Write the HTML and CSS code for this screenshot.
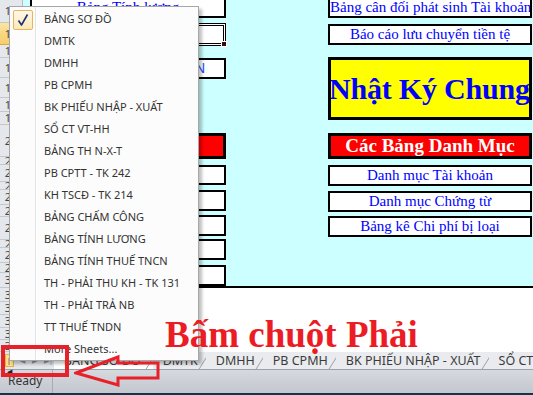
FILE: index.html
```html
<!DOCTYPE html>
<html lang="vi">

<head>
    <meta charset="UTF-8">
    <title>Bảng Sơ Đồ - Excel</title>
    <link rel="stylesheet" href="styles.css">
</head>

<body>
    <div class="window">
        <div class="sheet">
            <div class="rowhead">
                <div class="rh" style="height:23px">10</div>
                <div class="rh active" style="height:22px">11</div>
                <div class="rh" style="height:13px">12</div>
                <div class="rh" style="height:20px">13</div>
                <div class="rh" style="height:20px">14</div>
                <div class="rh" style="height:14px">15</div>
                <div class="rh" style="height:13px">16</div>
                <div class="rh" style="height:32px">20</div>
                <div class="rh" style="height:8px">21</div>
                <div class="rh" style="height:17px">22</div>
                <div class="rh" style="height:8px">23</div>
                <div class="rh" style="height:15px">24</div>
                <div class="rh" style="height:12px">25</div>
                <div class="rh" style="height:23px">26</div>
                <div class="rh" style="height:8px">27</div>
                <div class="rh" style="height:15px">28</div>
                <div class="rh" style="height:10px">29</div>
                <div class="rh" style="height:15px">30</div>
                <div class="rh" style="height:14px">31</div>
                <div class="rh" style="height:13px">32</div>
                <div class="rh" style="height:13px">33</div>
                <div class="rh" style="height:12px">34</div>
                <div class="rh" style="height:12px">35</div>
            </div>

            <div class="canvas">
                <div class="board">
                    <div class="col col-left">
                        <div class="box first">Bảng Tính lương</div>
                        <div class="box selected"><span class="handle"></span></div>
                        <div class="box sans">BẢNG CÂN ĐỐI KẾ TOÁN</div>
                        <div class="title red left-red">Sổ Sách Kế Toán</div>
                        <div class="box">Sổ Nhật ký chung</div>
                        <div class="box">Sổ Cái tài khoản</div>
                        <div class="box">Sổ chi tiết tài khoản</div>
                        <div class="box">Sổ quỹ tiền mặt</div>
                        <div class="box">Sổ tiền gửi ngân hàng</div>
                    </div>

                    <div class="col col-right">
                        <div class="box first">Bảng cân đối phát sinh Tài khoản</div>
                        <div class="box">Báo cáo lưu chuyển tiền tệ</div>
                        <div class="big-yellow">Nhật Ký Chung</div>
                        <div class="title red">Các Bảng Danh Mục</div>
                        <div class="box">Danh mục Tài khoản</div>
                        <div class="box">Danh mục Chứng từ</div>
                        <div class="box">Bảng kê Chi phí bị loại</div>
                    </div>
                </div>
                <div class="note">Bấm chuột Phải</div>
            </div>
        </div>

        <div class="tabbar">
            <div class="nav">
                <span class="nav-btn hot">|&#9664;</span>
                <span class="nav-btn">&#9664;</span>
                <span class="nav-btn">&#9654;</span>
                <span class="nav-btn">&#9654;|</span>
            </div>
            <div class="tab current">BẢNG SƠ ĐỒ</div>
            <div class="tab">DMTK</div>
            <div class="tab">DMHH</div>
            <div class="tab">PB CPMH</div>
            <div class="tab">BK PHIẾU NHẬP - XUẤT</div>
            <div class="tab">SỔ CT VT-HH</div>
        </div>

        <div class="status">
            <span class="ready">Ready</span>
        </div>
        <div class="taskbar"></div>

        <!-- context menu of the sheet navigation buttons -->
        <div class="menu">
            <div class="item checked">
                <span class="check">
                    <svg width="18" height="18" viewBox="0 0 18 18">
                        <path d="M4.5 9.5 L7.5 14 L13.5 3.5" fill="none" stroke="#1d2f7a" stroke-width="1.6" stroke-linejoin="round"/>
                    </svg>
                </span>
                BẢNG SƠ ĐỒ
            </div>
            <div class="item">DMTK</div>
            <div class="item">DMHH</div>
            <div class="item">PB CPMH</div>
            <div class="item">BK PHIẾU NHẬP - XUẤT</div>
            <div class="item">SỔ CT VT-HH</div>
            <div class="item">BẢNG TH N-X-T</div>
            <div class="item">PB CPTT - TK 242</div>
            <div class="item">KH TSCĐ - TK 214</div>
            <div class="item">BẢNG CHẤM CÔNG</div>
            <div class="item">BẢNG TÍNH LƯƠNG</div>
            <div class="item">BẢNG TÍNH THUẾ TNCN</div>
            <div class="item">TH - PHẢI THU KH - TK 131</div>
            <div class="item">TH - PHẢI TRẢ NB</div>
            <div class="item">TT THUẾ TNDN</div>
            <div class="item">More Sheets...</div>
        </div>

        <!-- red annotations -->
        <div class="mark-box"></div>
        <svg class="mark-arrow" width="90" height="36" viewBox="74 354 90 36">
            <path d="M76 373 L118 357 L118 363 L158 363 L158 378 L118 378 L118 385 Z" fill="none" stroke="#e8202a" stroke-width="3" stroke-linejoin="miter"/>
        </svg>
    </div>
</body>

</html>
```

FILE: styles.css
```css
body {
    margin: 0;
    padding: 0;
    background: #ffffff;
}

.window {
    position: relative;
    width: 533px;
    height: 395px;
    overflow: hidden;
    font-family: "Noto Sans", Arial, sans-serif;
}

/* sheet */
.sheet {
    display: flex;
    height: 352px;
}

.rowhead {
    width: 22px;
    background: #e4e8ed;
    border-right: 1px solid #b7bcc4;
    overflow: hidden;
}

.rh {
    box-sizing: border-box;
    border-bottom: 1px solid #c3c8cf;
    font-size: 11px;
    line-height: 12px;
    color: #444;
    text-align: center;
    overflow: hidden;
    display: flex;
    align-items: center;
    justify-content: center;
}

.rh.active {
    background: linear-gradient(#fbe3a1, #f6cd6a);
    border-bottom-color: #e0a93c;
}

.canvas {
    flex: 1;
    background: #ffffff;
}

.board {
    display: flex;
    gap: 102px;
    height: 286px;
    padding-left: 7px;
    background: #ccffff;
    border-bottom: 2px solid #000;
}

.col {
    display: flex;
    flex-direction: column;
}

.col-left {
    width: 196px;
}

.col-right {
    width: 204px;
}

.box {
    position: relative;
    box-sizing: border-box;
    height: 21px;
    border: 2px solid #000;
    background: #fff;
    color: #0000ff;
    font-family: "Liberation Serif", "Times New Roman", serif;
    font-size: 15px;
    line-height: 17px;
    text-align: center;
    white-space: nowrap;
    overflow: hidden;
}

.box.first {
    margin-top: -3px;
}

.col-left .box:nth-child(2) {
    margin-top: 5px;
}

.col-left .box:nth-child(3) {
    margin-top: 12px;
}

.col-left .title {
    margin-top: 54px;
}

.col-left .box:nth-child(5) {
    margin-top: 6px;
}

.col-left .box:nth-child(6) {
    margin-top: 5px;
}

.col-left .box:nth-child(7) {
    margin-top: 4px;
}

.col-left .box:nth-child(8) {
    margin-top: 3px;
}

.col-left .box:nth-child(9) {
    margin-top: 5px;
}

.box.selected {
    height: 23px;
    border: 3px double #000;
    overflow: visible;
}

.handle {
    position: absolute;
    right: -4px;
    bottom: -4px;
    width: 4px;
    height: 4px;
    background: #3a0a0a;
    border: 1px solid #fff;
}

.box.sans {
    font-family: "Liberation Sans", Arial, sans-serif;
    font-size: 14px;
    line-height: 16px;
    color: #2050ff;
    text-align: right;
    padding-right: 19px;
}

.col-right .box:nth-child(2) {
    margin-top: 6px;
}

.big-yellow {
    box-sizing: border-box;
    height: 63px;
    margin-top: 12px;
    border: 3px solid #000;
    background: #ffff00;
    color: #0000ff;
    font-family: "Liberation Serif", "Times New Roman", serif;
    font-weight: bold;
    font-size: 30px;
    letter-spacing: -0.2px;
    text-indent: -2px;
    white-space: nowrap;
    overflow: hidden;
    display: flex;
    align-items: center;
}

.title {
    box-sizing: border-box;
    height: 26px;
    margin-top: 13px;
    border: 3px solid #000;
    font-family: "Liberation Serif", "Times New Roman", serif;
    font-weight: bold;
    font-size: 19px;
    line-height: 20px;
    color: #fff;
    text-align: center;
    white-space: nowrap;
    overflow: hidden;
}

.red {
    background: #ff0000;
}

.col-right .title + .box {
    margin-top: 6px;
}

.col-right .box:nth-child(6) {
    margin-top: 5px;
}

.col-right .box:nth-child(7) {
    margin-top: 4px;
}

/* annotation text drawn over the menu */
.note {
    position: relative;
    z-index: 3;
    padding: 27px 0 0 142px;
    font-family: "Liberation Serif", "Times New Roman", serif;
    font-weight: bold;
    font-size: 37px;
    line-height: 40px;
    color: #ec1c24;
    white-space: nowrap;
}

/* sheet tabs */
.tabbar {
    display: flex;
    height: 17px;
    background: #e3e6ea;
    border-bottom: 1px solid #9aa1ab;
    font-size: 12.5px;
    color: #3b3b3b;
}

.nav {
    display: flex;
    width: 62px;
    align-items: center;
    padding-left: 5px;
    box-sizing: border-box;
    gap: 5px;
}

.nav-btn {
    font-size: 7px;
    color: #8a8f96;
    line-height: 11px;
    height: 11px;
    padding: 0 1px;
}

.nav-btn.hot {
    background: #fbe08d;
    border: 1px solid #e0b44a;
    color: #222;
}

.tab {
    position: relative;
    padding: 0 8px 0 10px;
    line-height: 17px;
    white-space: nowrap;
    background: #e9ebee;
}

.tab::after {
    content: "";
    position: absolute;
    right: 2px;
    top: 3px;
    bottom: 0;
    border-right: 1px solid #98a0aa;
    transform: skewX(-32deg);
}

.tab.current {
    background: #ffffff;
    padding: 0 12px 0 10px;
}

/* status bar */
.status {
    display: flex;
    align-items: center;
    height: 23px;
    background: linear-gradient(#d6d9de, #c3c7ce);
}

.ready {
    padding: 0 10px 0 8px;
    height: 23px;
    line-height: 22px;
    font-size: 12px;
    color: #333;
    border-right: 1px solid #a7acb4;
}

.taskbar {
    height: 3px;
    background: #17324d;
}

/* context menu */
.menu {
    position: absolute;
    z-index: 2;
    left: 9px;
    top: 6px;
    width: 190px;
    height: 355px;
    box-sizing: border-box;
    padding-top: 1px;
    background: #fcfcfc;
    border: 1px solid #a7a7a7;
    box-shadow: 3px 3px 3px rgba(0, 0, 0, 0.25);
    font-size: 11px;
    color: #333;
}

.menu::before {
    content: "";
    position: absolute;
    left: 25px;
    top: 0;
    bottom: 0;
    width: 1px;
    background: #e2e3e3;
    border-right: 1px solid #ffffff;
}

.item {
    position: relative;
    height: 22px;
    line-height: 22px;
    padding-left: 34px;
    white-space: nowrap;
}

.check {
    position: absolute;
    left: 3px;
    top: 2px;
    width: 18px;
    height: 18px;
    border: 1px solid #e6b461;
    border-radius: 2px;
    background: linear-gradient(#fff8e6, #fde9b6);
}

.check svg {
    display: block;
}

/* red annotations */
.mark-box {
    position: absolute;
    z-index: 4;
    left: 1px;
    top: 345px;
    width: 60px;
    height: 24px;
    border: 4px solid #e8202a;
}

.mark-arrow {
    position: absolute;
    z-index: 4;
    left: 74px;
    top: 354px;
}
```
